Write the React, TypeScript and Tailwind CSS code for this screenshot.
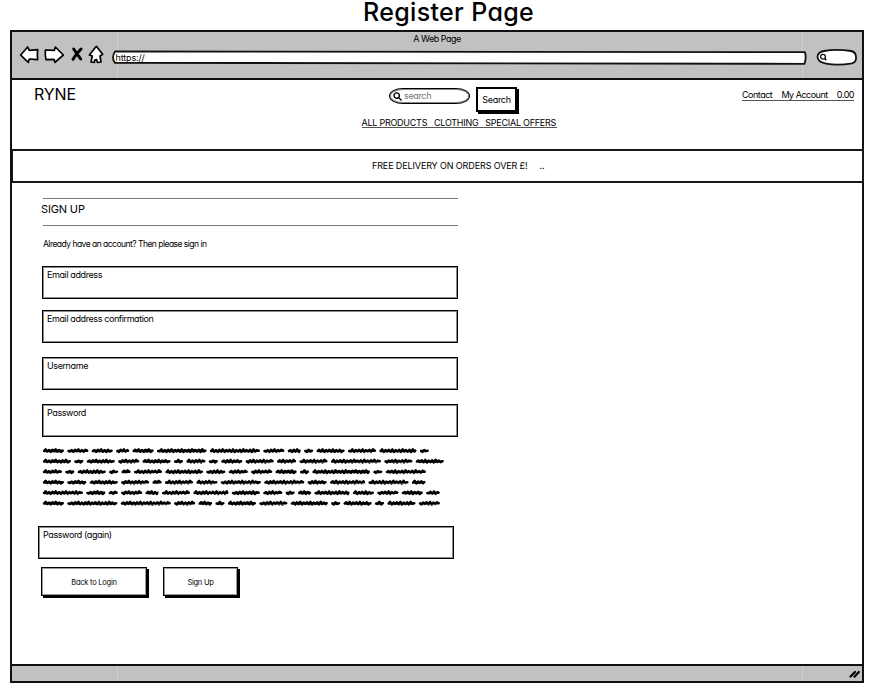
import React from "react";

const scribbleRows: number[][] = [
  [21, 21, 21, 13, 21, 49.5, 50, 21, 13, 9, 28, 28, 37, 9],
  [28, 9, 28, 21, 28, 9, 19, 9, 21, 28, 19, 28, 50, 28, 28],
  [19, 9, 28, 9, 9, 28, 37.5, 19, 19, 21, 21, 9, 57.5, 9, 40],
  [21, 19, 28, 28, 9, 28, 21, 40, 40, 19, 35, 40, 13.5],
  [40, 19, 9, 21, 13, 28, 35, 28, 19, 9, 13, 35, 21, 21, 21, 13.5],
  [21, 50, 50, 21, 13.5, 9, 28, 28, 37, 9, 28, 9, 28, 21],
];

function scribblePath(widths: number[], y: number): string {
  let x = 2.1;
  let d = "";
  widths.forEach((w, n) => {
    const end = x + w - 2.4;
    d += `M${x} ${y + 0.3}`;
    let i = n;
    for (let p = x + 1.5; p < end - 0.5; p += 1.7, i++) {
      const up = i % 2 === 0 ? -1.3 + (i % 3) * 0.35 : 0.7 + (i % 5) * 0.15;
      d += `L${p.toFixed(2)} ${(y + up).toFixed(2)}`;
    }
    d += `L${end} ${y}M${x} ${y + 0.4}L${end} ${y + 0.1}`;
    x += w + 3.42;
  });
  return d;
}

function Scribble() {
  return (
    <svg className="mt-[9px] ml-[30px] block h-[66px] w-[404px]" viewBox="0 0 404 66" fill="none" stroke="#000" strokeWidth="2.5" strokeLinecap="round" strokeLinejoin="round">
      {scribbleRows.map((r, i) => (
        <path key={i} d={scribblePath(r, 4.7 + i * 10.5)} />
      ))}
    </svg>
  );
}

function Field({ label, place }: { label: string; place: string }) {
  return (
    <div className={`h-[33px] w-[416px] border border-black px-1 pt-px text-[9px] leading-[14px] tracking-[-0.4px] shadow-[inset_0_0_0_1px_#8a8a8a] ${place}`}>
      {label}
    </div>
  );
}

function NavIcons() {
  return (
    <svg className="h-[21px] w-[86px]" viewBox="57 132 258 63" fill="#fff" stroke="#000" strokeWidth="5" strokeLinejoin="round" strokeLinecap="round">
      <path d="M62 165L83 141L88 151L113 149Q111 164 113 179L88 177L85 187L73 176Z" />
      <path d="M136 150L163 151L166 141L190 165L165 187L162 178L138 179Q135 164 136 150Z" />
      <path d="M221 147L242 177M243 147Q230 160 219 178" strokeWidth="9" />
      <path d="M289 139L308 163L300 168L303 186L292 187L290 179L284 180L283 187L273 186L277 168L268 165Z" />
    </svg>
  );
}

function Glass({ className }: { className: string }) {
  return (
    <svg className={className} viewBox="0 0 9 9" fill="none" stroke="#000" strokeWidth="1.4" strokeLinecap="round">
      <circle cx="3.7" cy="3.6" r="2.7" />
      <path d="M5.7 5.7L8.1 8.1" />
    </svg>
  );
}

export default function App() {
  return (
    <div className="h-[691px] w-[886px] overflow-hidden bg-white pl-[10px] font-['Inter','Liberation_Sans',sans-serif] text-black [font-feature-settings:'cv11'] whitespace-nowrap">
      <h1 className="h-[30px] w-[877px] text-center text-[25px] leading-[25px] font-medium tracking-[0.35px]">
        Register Page
      </h1>
      <div className="flex h-[653px] w-[854px] flex-col border-2 border-[#111]">
        <header className="relative h-[48px] shrink-0 border-b-2 border-[#111] bg-[#c1c1c1]">
          <div className="absolute top-0 left-[105px] h-full w-px bg-[#cecece]" />
          <div className="absolute top-0 left-[790px] h-full w-px bg-[#cecece]" />
          <div className="h-[12px] pt-px text-center text-[9px] leading-[12px] tracking-[-0.5px]">A Web Page</div>
          <div className="relative flex pl-[7px]">
            <NavIcons />
            <svg className="mt-[6px] ml-[6px] h-[16px] w-[696px]" viewBox="0 0 696 16" fill="#fff" stroke="#111" strokeWidth="1.8" strokeLinejoin="round">
              <path d="M4 1.4Q350 0.9 694 2.2Q695.5 8 693.5 13.8Q350 13.8 4 12.8Q0 8 4 1.4Z" />
              <text x="4.5" y="10.5" fill="#000" stroke="none" className="text-[9px] tracking-[-0.15px]">https://</text>
            </svg>
            <svg className="mt-[4px] ml-[9px] h-[18px] w-[42px]" viewBox="0 0 42 18" fill="#fff" stroke="#111" strokeWidth="1.8" strokeLinejoin="round">
              <path d="M8 3Q20 0.7 35 3Q40 4 40 9Q40.5 14 36 15.3Q22 17.6 10 15.6Q1.5 14 1.5 8.5Q2 4 8 3Z" />
              <circle cx="7" cy="8.7" r="2.4" strokeWidth="1.3" />
              <path d="M8.7 10.6L10.3 12.3" strokeWidth="1.5" />
            </svg>
          </div>
        </header>

        <div className="flex h-[69px] shrink-0 justify-between">
          <div className="w-[328px] pt-[4px] pl-[22px] text-[16px] leading-[20px] tracking-[-0.1px]">RYNE</div>
          <div className="flex w-[240px] flex-col items-center">
            <div className="flex h-[37px] w-[142px]">
              <div className="mt-[8px] flex h-[16px] w-[81px] items-center rounded-[14px/8px] border border-black pl-[3px] text-[9px] tracking-[-0.35px] text-[#777] shadow-[inset_0_0_0_1px_#888]">
                <Glass className="mr-[2px] h-[9px] w-[9px]" />
                search
              </div>
              <div className="mt-[7px] ml-[6px] h-[25px] w-[41px] border-2 border-black text-center text-[9px] leading-[22px] tracking-[-0.3px] shadow-[2px_2px_0_#000]">
                Search
              </div>
            </div>
            <nav className="mr-[2px] h-[11px] w-[195px] border-b border-[#555] text-[9px] leading-[12px] tracking-[-0.25px]">
              ALL PRODUCTS&nbsp;&nbsp; CLOTHING&nbsp;&nbsp; SPECIAL OFFERS
            </nav>
          </div>
          <div className="w-[282px] pt-[10px] pl-[162px] text-[9px] leading-[10px] tracking-[-0.5px]">
            <div className="flex w-[112px] justify-between border-b border-[#555]">
              <span>Contact</span>
              <span>My Account</span>
              <span>0.00</span>
            </div>
          </div>
        </div>

        <div className="-mr-[2px] flex h-[34px] shrink-0 items-center border-2 border-l border-[#181818] pb-px pl-[359px] text-[9px] leading-[12px] tracking-[-0.12px]">
          FREE DELIVERY ON ORDERS OVER £!<span className="ml-[12px]">..</span>
        </div>

        <main className="grow">
          <div className="mt-[15px] ml-[31px] h-px w-[415px] bg-[#777]" />
          <h2 className="ml-[29px] h-[26px] text-[11px] leading-[21px] tracking-[-0.15px]">SIGN UP</h2>
          <div className="ml-[31px] h-px w-[415px] bg-[#777]" />
          <p className="mt-[12px] ml-[31px] h-[28px] text-[8.5px] leading-[12px] tracking-[-0.52px]">
            Already have an account? Then please sign in
          </p>
          <Field label="Email address" place="ml-[30px]" />
          <Field label="Email address confirmation" place="ml-[30px] mt-[11px]" />
          <Field label="Username" place="ml-[30px] mt-[14px]" />
          <Field label="Password" place="ml-[30px] mt-[14px]" />
          <Scribble />
          <Field label="Password (again)" place="ml-[26px] mt-[14px]" />
          <div className="flex pt-[8px] pl-[29px] text-center text-[7.5px] leading-[29px] tracking-[-0.25px]">
            <div className="h-[29px] w-[106px] border border-black shadow-[inset_0_0_0_1px_#999,2px_2px_0_#000]">Back to Login</div>
            <div className="ml-[16px] h-[29px] w-[75px] border border-black shadow-[inset_0_0_0_1px_#999,2px_2px_0_#000]">Sign Up</div>
          </div>
        </main>

        <footer className="relative flex h-[17px] shrink-0 items-center justify-end border-t-2 border-[#111] bg-[#c1c1c1]">
          <svg className="mr-[2px] h-[9px] w-[11px]" viewBox="0 0 11 9" stroke="#000" strokeWidth="2.2" strokeLinecap="round">
            <path d="M1.5 7.5L6 3M5.5 7.7L9.8 3" />
          </svg>
          <div className="absolute top-0 left-[105px] h-full w-px bg-[#cecece]" />
          <div className="absolute top-0 left-[790px] h-full w-px bg-[#cecece]" />
        </footer>
      </div>
    </div>
  );
}
